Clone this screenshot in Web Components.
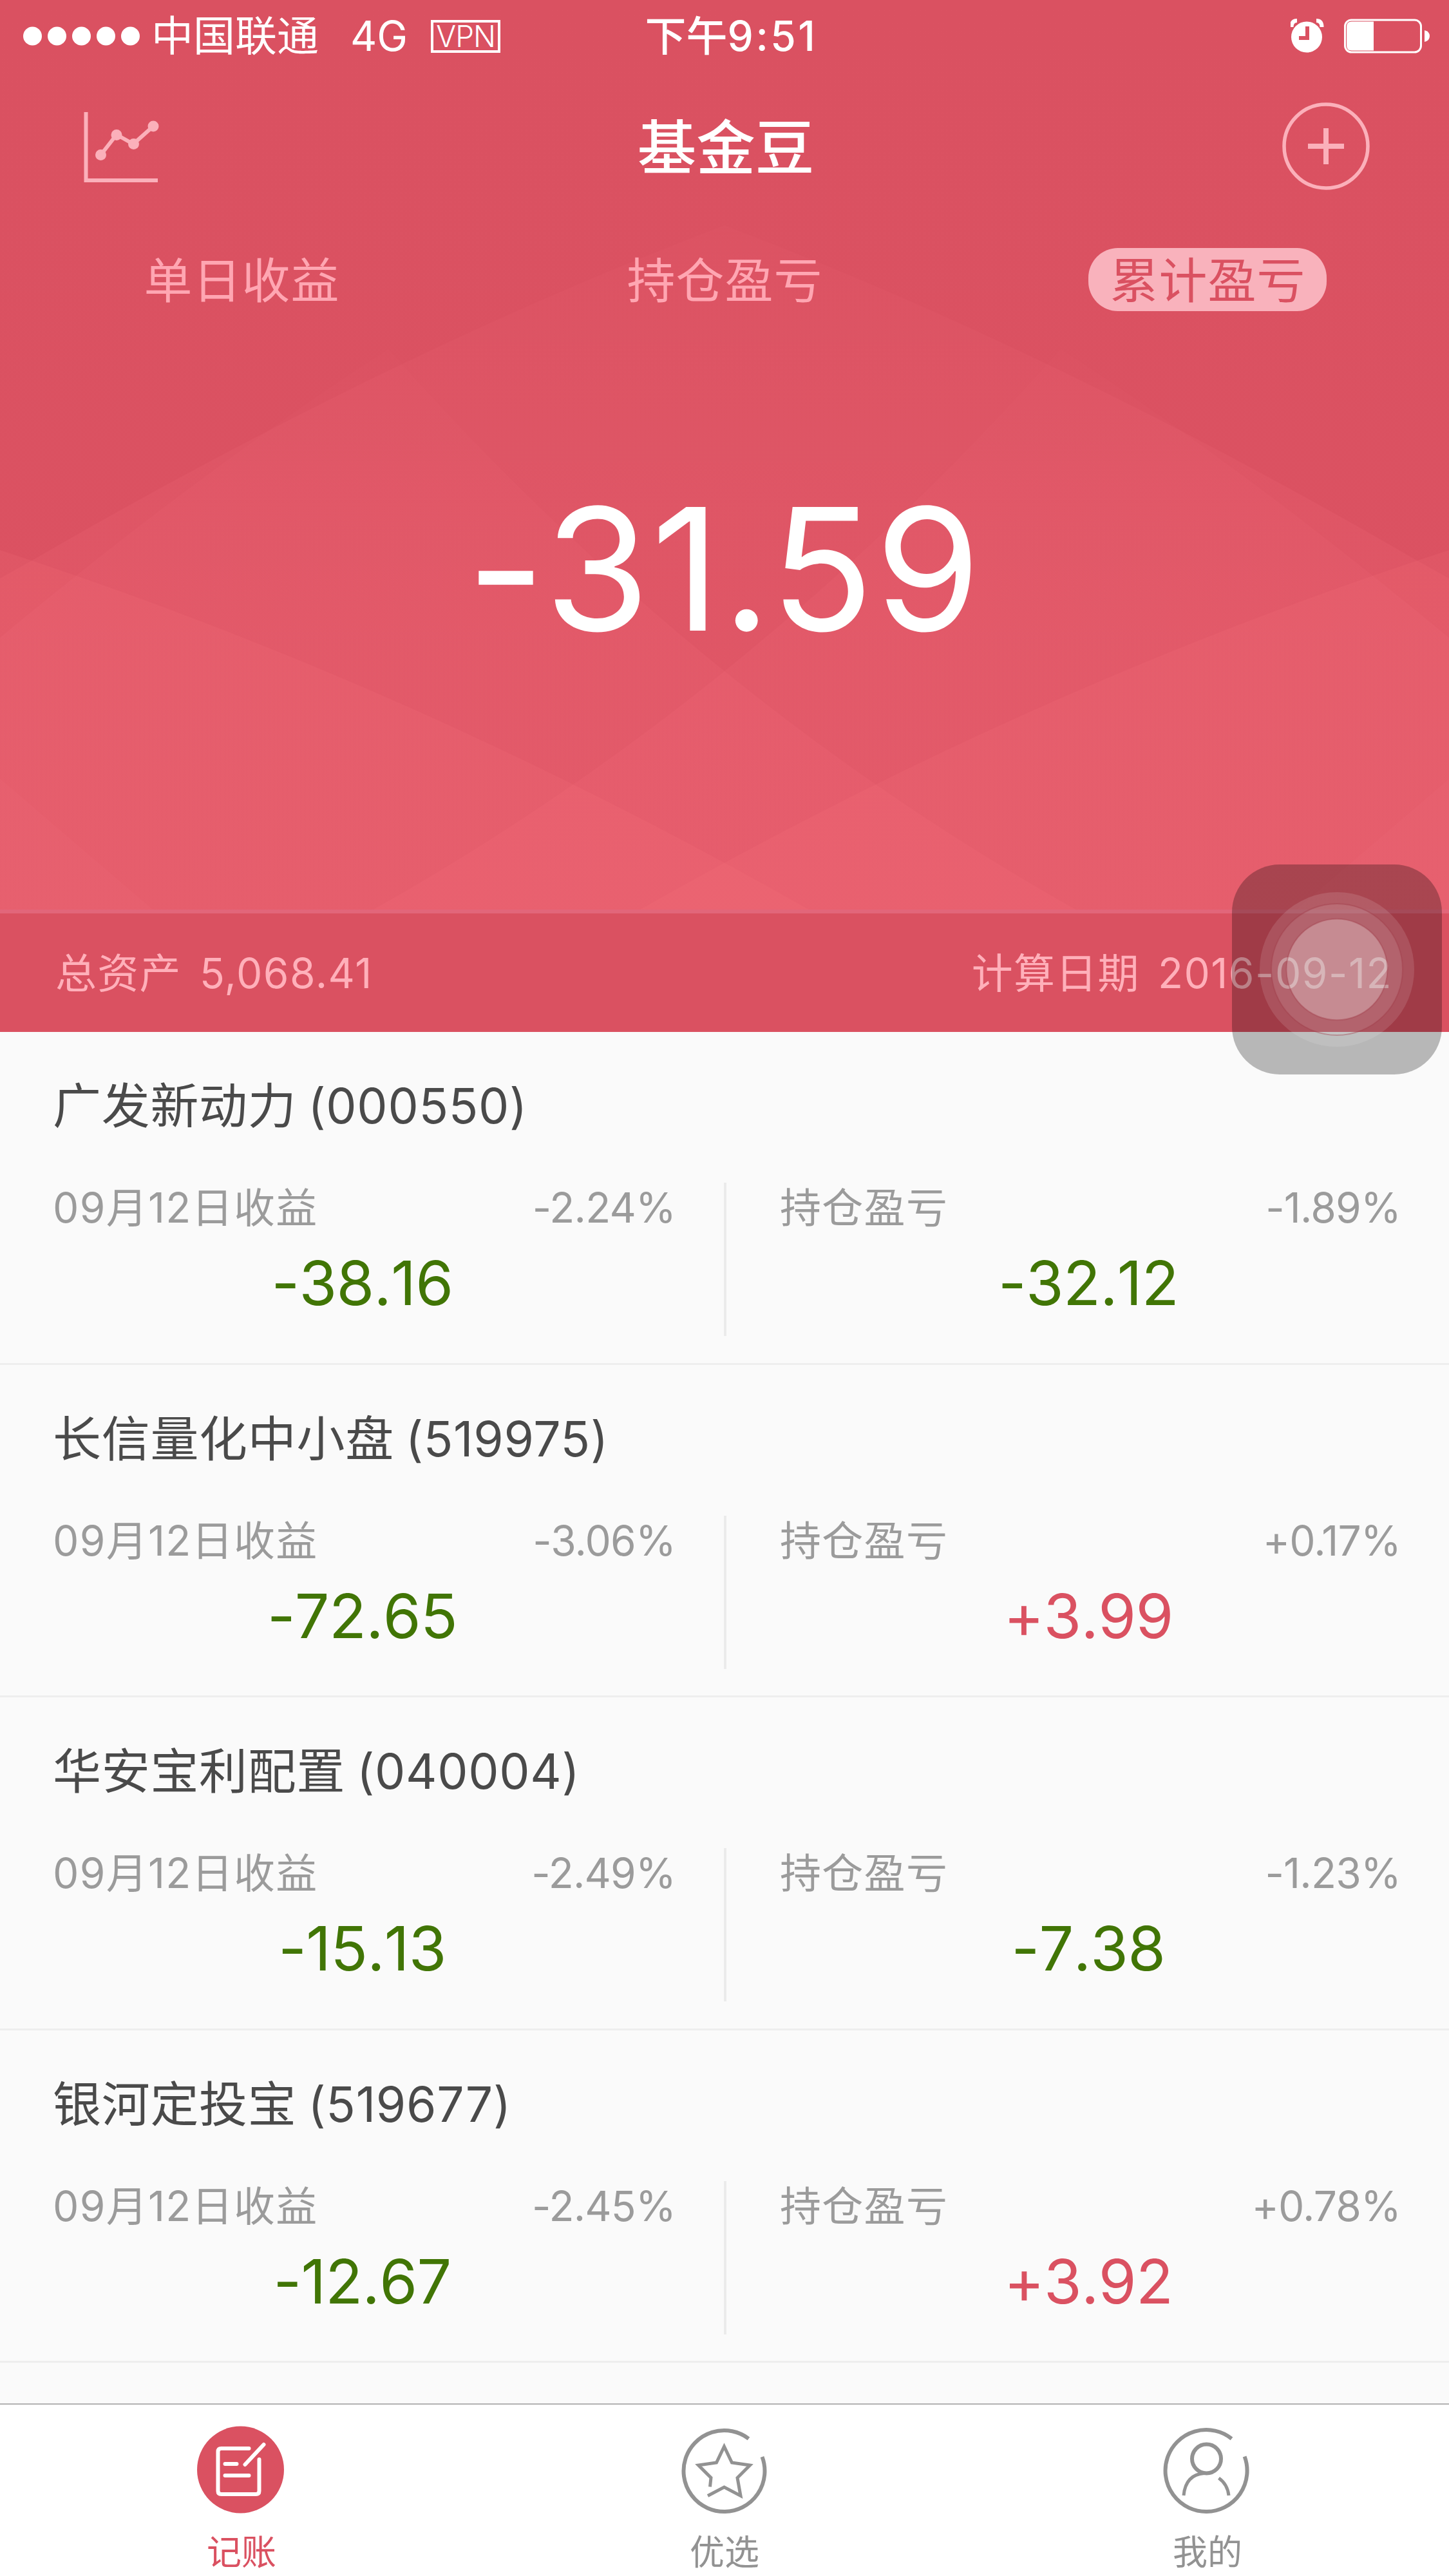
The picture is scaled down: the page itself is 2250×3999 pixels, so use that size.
<!DOCTYPE html>
<html lang="zh-CN">
<head>
<meta charset="utf-8">
<title>基金豆</title>
<style>
  body {
    margin: 0;
    background: #fafafa;
    font-family: Inter, "Noto Sans CJK SC", sans-serif;
  }
</style>
</head>
<body>
<fund-app></fund-app>

<script>
const define = (name, html, init) => {
  const template = document.createElement('template');
  template.innerHTML = html;

  customElements.define(name, class extends HTMLElement {
    constructor() {
      super();
      this.attachShadow({ mode: 'open' });
      this.shadowRoot.appendChild(template.content.cloneNode(true));
    }

    connectedCallback() {
      if (init) init(this, this.shadowRoot);
    }
  });
};

define('status-bar', `
  <style>
  :host {
    display: grid;
    grid-template-columns: 1fr auto 1fr;
    align-items: center;
    height: 110px;
    padding: 0 30px 0 36px;
    box-sizing: border-box;
    color: #fff;
    font-size: 64px;
    line-height: 112px;
  }

  .left, .right {
    display: flex;
    align-items: center;
  }

  .right {
    justify-content: flex-end;
  }

  .carrier {
    margin-left: 17px;
    font-size: 65px;
  }

  .network {
    margin-left: 49px;
  }

  .vpn {
    margin-left: 36px;
    width: 108px;
    height: 51px;
    box-sizing: border-box;
    border: 4px solid #fff;
    font-size: 46px;
    font-weight: 300;
    line-height: 43px;
    letter-spacing: -1px;
    text-align: center;
  }

  .time {
    padding-left: 15px;
    font-weight: 500;
  }

  .time span {
    letter-spacing: 3.5px;
  }

  svg {
    display: block;
  }
  </style>

  <div class="left">
    <svg width="182" height="30" fill="#fff">
      <circle cx="14.5" cy="15" r="14.5"/><circle cx="52.5" cy="15" r="14.5"/><circle cx="90.5" cy="15" r="14.5"/><circle cx="128.5" cy="15" r="14.5"/><circle cx="166.5" cy="15" r="14.5"/>
    </svg>
    <span class="carrier">中国联通</span>
    <span class="network">4G</span>
    <span class="vpn">VPN</span>
  </div>
  <div class="time">下午<span>9:51</span></div>
  <div class="right">
    <svg width="216" height="54" viewBox="0 0 216 54">
      <circle cx="25" cy="28.500" r="24" fill="#fff"/>
      <path d="M1.500 13Q1.500 3 10 3" fill="none" stroke="#fff" stroke-width="6"/>
      <path d="M48.500 13Q48.500 3 40 3" fill="none" stroke="#fff" stroke-width="6"/>
      <path d="M26 12V30H13" fill="none" stroke="#da5161" stroke-width="6"/>
      <rect x="84.500" y="2" width="118" height="50" rx="10" fill="none" stroke="#fff" stroke-width="3"/>
      <path d="M95 4.500H129V49.500H95Q87 49.500 87 41.500V12.500Q87 4.500 95 4.500Z" fill="#fff"/>
      <path d="M208 18Q216 20 216 27T208 36Z" fill="#fff"/>
    </svg>
  </div>
`);

define('title-bar', `
  <style>
  :host {
    display: flex;
    justify-content: space-between;
    align-items: center;
    height: 234px;
    padding: 0 122px 0 129px;
    box-sizing: border-box;
    color: #fff;
    font-size: 91.5px;
    font-weight: 500;
  }

  .title {
    padding: 0 3px 9px 0;
  }

  svg {
    display: block;
    fill: none;
    stroke: #fbb0ba;
  }
  </style>

  <svg width="138" height="140" viewBox="0 0 138 140" stroke-width="6">
    <path d="M4.500 17V123H116"/>
    <path d="M27.500 83.500L52 52L78 66.500L109 39"/>
    <g fill="#fbb0ba" stroke="none">
      <circle cx="27.500" cy="83.500" r="8.500"/><circle cx="52" cy="52.500" r="8.500"/><circle cx="78.500" cy="66.500" r="8.500"/><circle cx="109" cy="39" r="8.500"/>
    </g>
  </svg>
  <div class="title"><slot></slot></div>
  <svg width="138" height="138" viewBox="0 0 138 138" stroke-width="5.500">
    <circle cx="69" cy="69" r="65"/>
    <path d="M41 69H97M69 41V97" stroke-width="8"/>
  </svg>
`);

define('profit-tab', `
  <style>
  :host {
    flex: 1;
    display: flex;
    justify-content: center;
    color: #ffa6b2;
    font-size: 75px;
    line-height: 101px;
    letter-spacing: 1px;
  }

  span {
    height: 98px;
    padding: 0 32px 0 33px;
    border-radius: 46px;
  }

  :host([active]) span {
    background: #f9b2bc;
    color: #da5161;
  }
  </style>
  <span><slot></slot></span>
`);

define('fund-header', `
  <style>
  :host {
    display: block;
    position: relative;
    height: 1602px;
    background: linear-gradient(#da5161, #dc5262 1412px);
  }

  .facets {
    position: absolute;
    left: 0;
    top: 0;
    fill: #ff7987;
  }

  .content {
    position: relative;
    display: flex;
    flex-direction: column;
    height: 100%;
  }

  .tabs {
    display: flex;
    margin-top: 41px;
    height: 98px;
  }

  .total {
    flex: 1;
    display: flex;
    align-items: center;
    justify-content: center;
    padding-bottom: 130px;
    color: #fff;
    font-size: 264px;
    font-weight: 400;
    letter-spacing: 2.5px;
  }

  .summary {
    display: flex;
    justify-content: space-between;
    align-items: center;
    height: 190px;
    box-sizing: border-box;
    padding: 0 88px 8px 86px;
    border-top: 6px solid #e2667a;
    background: #da5161;
    color: #ffb0ba;
    font-size: 64px;
    letter-spacing: 1.3px;
  }

  .summary span {
    margin-left: 28px;
    letter-spacing: 1.5px;
  }
  </style>

  <svg class="facets" width="2250" height="1412" viewBox="0 0 2250 1412">
    <defs>
      <linearGradient id="arch" gradientUnits="userSpaceOnUse" x1="0" y1="345" x2="0" y2="800">
        <stop offset="0" stop-color="#ff7987" stop-opacity=".04"/>
        <stop offset="1" stop-color="#ff7987" stop-opacity=".11"/>
      </linearGradient>
      <linearGradient id="peak" gradientUnits="userSpaceOnUse" x1="0" y1="540" x2="0" y2="1000">
        <stop offset="0" stop-color="#ff7987" stop-opacity=".02"/>
        <stop offset="1" stop-color="#ff7987" stop-opacity=".1"/>
      </linearGradient>
    </defs>
    <path fill="url(#arch)" d="M0 898L50 870Q610 545 1125 350Q1640 545 2200 870L2250 898V1412H0Z"/>
    <g fill="url(#peak)">
      <path d="M0 990Q320 725 603 542Q1080 1080 1670 1412H0Z"/>
      <path d="M2250 990Q1930 725 1647 542Q1170 1080 580 1412H2250Z"/>
    </g>
    <g fill-opacity=".13">
      <path d="M0 854Q640 1062 1256 1412H0Z"/>
      <path d="M2250 854Q1610 1062 994 1412H2250Z"/>
    </g>
    <g fill-opacity=".07">
      <path d="M0 1209L237 1412H0Z"/>
      <path d="M2250 1209L2013 1412H2250Z"/>
    </g>
  </svg>
  <div class="content">
    <status-bar></status-bar>
    <title-bar>基金豆</title-bar>
    <div class="tabs">
      <profit-tab>单日收益</profit-tab>
      <profit-tab>持仓盈亏</profit-tab>
      <profit-tab active>累计盈亏</profit-tab>
    </div>
    <div class="total">-31.59</div>
    <div class="summary">
      <div>总资产<span>5,068.41</span></div>
      <div>计算日期<span>2016-09-12</span></div>
    </div>
  </div>
`);

define('profit-cell', `
  <style>
  :host {
    display: block;
    height: 238px;
    box-sizing: border-box;
  }

  .head {
    display: flex;
    justify-content: space-between;
    height: 78px;
    color: #9b9b9b;
    font-size: 64px;
    line-height: 78px;
  }

  .label {
    letter-spacing: 1.3px;
  }

  .rate {
    letter-spacing: -.8px;
  }

  .value {
    margin-top: 18px;
    padding-right: 6px;
    color: #417505;
    font-size: 95px;
    line-height: 120px;
    letter-spacing: -.7px;
    text-align: center;
    font-kerning: none;
  }

  .value.up {
    color: #da5161;
  }
  </style>

  <div class="head">
    <span class="label"><slot></slot></span>
    <span class="rate"></span>
  </div>
  <div class="value"></div>
`, (host, root) => {
  const value = host.getAttribute('value');
  root.querySelector('.rate').textContent = host.getAttribute('rate');
  root.querySelector('.value').textContent = value;
  root.querySelector('.value').classList.toggle('up', value.startsWith('+'));
});

define('fund-row', `
  <style>
  :host {
    display: block;
    height: 516.6px;
    box-sizing: border-box;
    padding-top: 65px;
    border-bottom: 3px solid #eee;
  }

  .name {
    height: 100px;
    padding-left: 82px;
    color: #4a4a4a;
    font-size: 75px;
    line-height: 100px;
    letter-spacing: .7px;
    word-spacing: -4px;
  }

  .cells {
    display: grid;
    grid-template-columns: 1124px 4px 1fr;
    margin-top: 69px;
  }

  .line {
    background: #ebebeb;
  }

  .day {
    padding: 0 75px 0 82px;
  }

  .hold {
    padding: 0 75px 0 83px;
  }
  </style>

  <div class="name"><slot></slot></div>
  <div class="cells">
    <profit-cell class="day">09月12日收益</profit-cell>
    <div class="line"></div>
    <profit-cell class="hold">持仓盈亏</profit-cell>
  </div>
`);

define('fund-list', `
  <style>
  :host {
    display: block;
    height: 2129px;
    overflow: hidden;
  }
  </style>
`, (host, root) => {
  const funds = [
    ['广发新动力 (000550)', '-2.24%', '-38.16', '-1.89%', '-32.12'],
    ['长信量化中小盘 (519975)', '-3.06%', '-72.65', '+0.17%', '+3.99'],
    ['华安宝利配置 (040004)', '-2.49%', '-15.13', '-1.23%', '-7.38'],
    ['银河定投宝 (519677)', '-2.45%', '-12.67', '+0.78%', '+3.92']
  ];

  funds.forEach(([name, dayRate, dayValue, holdRate, holdValue]) => {
    const row = document.createElement('fund-row');
    row.textContent = name;
    const day = row.shadowRoot.querySelector('.day');
    const hold = row.shadowRoot.querySelector('.hold');
    day.setAttribute('rate', dayRate);
    day.setAttribute('value', dayValue);
    hold.setAttribute('rate', holdRate);
    hold.setAttribute('value', holdValue);
    root.appendChild(row);
  });
});

define('nav-item', `
  <style>
  :host {
    flex: 1;
    display: flex;
    flex-direction: column;
    align-items: center;
    color: #929292;
    font-size: 54px;
    line-height: 70px;
  }

  :host([active]) {
    color: #da5161;
  }

  .icon {
    height: 136px;
    margin: 33px 0 26px;
  }
  </style>
  <div class="icon"><slot name="icon"></slot></div>
  <slot></slot>
`);

define('nav-bar', `
  <style>
  :host {
    display: flex;
    height: 268px;
    box-sizing: border-box;
    border-top: 2px solid #b2b2b2;
    background: #fff;
  }

  svg {
    display: block;
    overflow: visible;
    fill: none;
    stroke: #929292;
    stroke-width: 6;
  }
  </style>

  <nav-item active>
    <svg slot="icon" width="136" height="136" viewBox="-66.500 -68 136 136">
      <circle r="67.500" fill="#da5161" stroke="none"/>
      <g stroke="#fff" stroke-linecap="round" stroke-linejoin="round">
        <path d="M13 -33H-30Q-35 -33 -35 -28V33Q-35 38 -30 38H24Q29 38 29 33V-16"/>
        <path d="M36 -39L7 -8M-24 -9H-6M-24 9H13"/>
      </g>
    </svg>
    记账
  </nav-item>
  <nav-item>
    <svg slot="icon" width="136" height="136" viewBox="-67.500 -70 136 136">
      <path d="M38 -50.200A63 63 0 1 0 59 -22"/>
      <path d="M-25.500 38.500L0 25L25.500 38.500L20.500 10.500L40 -9L12 -13L0 -38L-12 -13L-40 -9L-20.500 10.500L-22 24.500" stroke-width="5"/>
    </svg>
    优选
  </nav-item>
  <nav-item>
    <svg slot="icon" width="136" height="136" viewBox="-66 -69.500 136 136">
      <path d="M39.500 -49.700A63.500 63.500 0 1 0 59.600 -22"/>
      <circle cx=".5" cy="-18.500" r="22.500"/>
      <path d="M-35 38.500Q-32 6 -3 4M19.500 11.500Q33 21 35 38.500" stroke-width="5"/>
    </svg>
    我的
  </nav-item>
`);

// floating touch button, sits over the header and the first row
define('assistive-touch', `
  <style>
  :host {
    position: absolute;
    left: 1913px;
    top: 1342px;
    width: 326px;
    height: 326px;
    border-radius: 74px;
    background: rgba(0, 0, 0, .265);
  }

  svg {
    display: block;
  }
  </style>

  <svg width="326" height="326" viewBox="0 0 326 326" fill="#fff">
    <circle cx="163" cy="163" r="120" fill-opacity=".12"/>
    <circle cx="163" cy="163" r="102" fill-opacity=".1" stroke="#a13b48" stroke-opacity=".4" stroke-width="2"/>
    <circle cx="163" cy="163" r="78.500" fill-opacity=".26" stroke="#a13b48" stroke-opacity=".4" stroke-width="2"/>
  </svg>
`);

define('fund-app', `
  <style>
  :host {
    display: block;
    position: relative;
    width: 2250px;
    height: 3999px;
    overflow: hidden;
    background: #fafafa;
  }
  </style>

  <fund-header></fund-header>
  <fund-list></fund-list>
  <nav-bar></nav-bar>
  <assistive-touch></assistive-touch>
`);
</script>
</body>
</html>
